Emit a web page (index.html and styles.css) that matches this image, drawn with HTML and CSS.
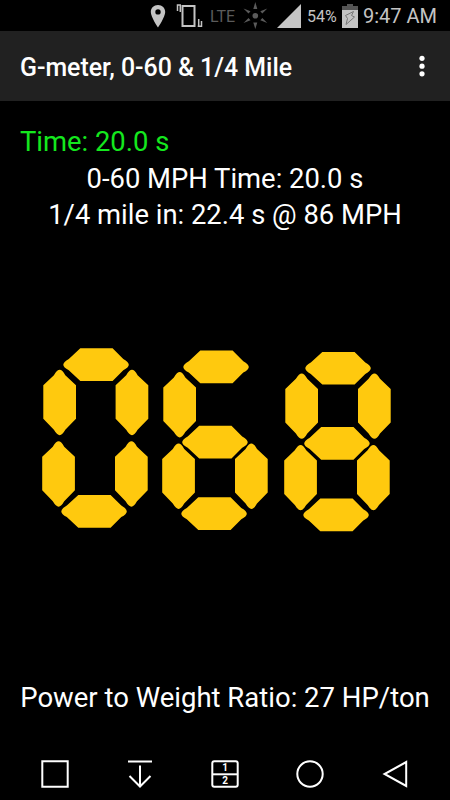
FILE: index.html
```html
<!DOCTYPE html>
<html lang="en">
<head>
  <meta charset="UTF-8" />
  <title>G-meter, 0-60 &amp; 1/4 Mile</title>
  <link rel="stylesheet" href="styles.css">
</head>
<body>
  <!-- shared shapes for the speed display -->
  <svg class="defs" width="0" height="0">
    <defs>
      <path id="seg-h" d="M17 0H49.3L60 10.6Q65.5 13.8 65.5 16.4Q65.5 19 60 22L49.3 32.7H17L5.500 22Q0 19 0 16.400Q0 13.800 5.500 10.600Z" />
      <path id="seg-v" d="M0 15.500V49L10.600 60Q13.800 65.400 16.400 65.400Q19 65.400 22 60L32.700 49V15.500L22 5.400Q19 0 16.400 0Q13.800 0 10.600 5.400Z" />
    </defs>
  </svg>

  <header class="status-bar">
    <svg class="icon-status" width="135" height="31" viewBox="0 0 135 31">
      <path fill="#c4c4c4" fill-rule="evenodd" d="M8 5C3.800 5 .8 8 .8 12C.8 17 8 27.500 8 27.500S15.200 17 15.200 12C15.200 8 12.200 5 8 5ZM8 9.200A2.700 2.700 0 1 1 8 14.600A2.700 2.700 0 0 1 8 9.200Z" />
      <path fill="none" stroke="#c4c4c4" stroke-width="2" d="M32.500 6H44.500V26H32.500Z" />
      <path fill="none" stroke="#c4c4c4" stroke-width="1.500" d="M31 5H27.500V11M30.300 5V12M47.700 26.300H51.500V21M48.700 19V26" />
      <g fill="#5b5b5b">
        <circle cx="105.300" cy="15.700" r="2.800" />
        <path d="M105.300 2L107.300 9H103.300ZM105.300 29L107.300 22.500H103.300ZM93.500 8.500L100.500 11.200L98.500 13.500ZM117.300 8.500L110.300 11.200L112.300 13.500ZM93.500 23L98.500 18L100.500 20.300ZM117.300 23L112.300 18L110.300 20.300Z" />
      </g>
    </svg>
    <span class="network">LTE</span>
    <svg width="24" height="24" viewBox="0 0 24 24"><path fill="#c4c4c4" d="M0 24L24 0V24Z" /></svg>
    <span class="percent">54%</span>
    <svg class="battery" width="16" height="24" viewBox="0 0 16 24">
      <path fill="#555" d="M5 0H11V2H16V6H0V2H5Z" />
      <path fill="#c4c4c4" d="M0 6H16V24H0Z" />
      <path fill="none" stroke="#777" d="M11.500 7.500L3.500 11.500L5.500 14.500L4 20.500L12.500 13L9.500 11.500Z" />
    </svg>
    <span class="clock">9:47 AM</span>
  </header>

  <div class="app-bar">
    <h1>G-meter, 0-60 &amp; 1/4 Mile</h1>
    <svg width="6" height="22" viewBox="0 0 6 22" fill="#fff">
      <circle cx="3" cy="3.300" r="2.600" />
      <circle cx="3" cy="11.200" r="2.600" />
      <circle cx="3" cy="18.800" r="2.600" />
    </svg>
  </div>

  <main>
    <div class="results">
      <div class="timer">Time: 20.0 s</div>
      <div class="result">0-60 MPH Time: 20.0 s</div>
      <div class="result">1/4 mile in: 22.4 s @ 86 MPH</div>
    </div>

    <svg class="speed" width="450" height="200" viewBox="0 340 450 200" fill="#ffc90e">
      <g transform="translate(36 340)">
        <use href="#seg-h" x="27.300" y="8.300" />
        <use href="#seg-v" x="7.300" y="29.800" />
        <use href="#seg-v" x="79.600" y="29.800" />
        <use href="#seg-v" x="6.200" y="101.300" />
        <use href="#seg-v" x="79" y="101.300" />
        <use href="#seg-h" x="25.300" y="155" />
      </g>
      <g transform="translate(156 342.300)">
        <use href="#seg-h" x="27.300" y="8.300" />
        <use href="#seg-v" x="7.300" y="29.800" />
        <use href="#seg-h" x="26.200" y="83.500" />
        <use href="#seg-v" x="6.200" y="101.300" />
        <use href="#seg-v" x="79" y="101.300" />
        <use href="#seg-h" x="25.300" y="155" />
      </g>
      <g transform="translate(278 343.600)">
        <use href="#seg-h" x="27.300" y="8.300" />
        <use href="#seg-v" x="7.300" y="29.800" />
        <use href="#seg-v" x="80" y="29.800" />
        <use href="#seg-h" x="26.200" y="83.500" />
        <use href="#seg-v" x="6.200" y="101.300" />
        <use href="#seg-v" x="79" y="101.300" />
        <use href="#seg-h" x="25.300" y="155" />
      </g>
    </svg>

    <div class="ratio">Power to Weight Ratio: 27 HP/ton</div>
  </main>

  <nav class="nav-bar">
    <svg viewBox="0 0 30 30"><path d="M2.300 2.300H27.700V27.700H2.300Z" /></svg>
    <svg viewBox="0 0 30 30"><path d="M3 2.500H27M15 6.500V27M4.500 17L15 27.500L25.500 17" /></svg>
    <svg viewBox="0 0 30 30">
      <rect x="2.300" y="2.300" width="25.400" height="25.400" rx="2" />
      <path d="M2 15.300H28" />
      <text x="15" y="12.400">1</text>
      <text x="15" y="24.800">2</text>
    </svg>
    <svg viewBox="0 0 30 30"><circle cx="15" cy="15" r="12.700" /></svg>
    <svg viewBox="0 0 30 30"><path d="M26.200 3V27L4.500 15Z" /></svg>
  </nav>
</body>
</html>
```
FILE: styles.css
```css
body {
  margin: 0;
  width: 450px;
  height: 800px;
  display: flex;
  flex-direction: column;
  background-color: #000;
  color: #fff;
  font-family: Roboto, sans-serif;
  overflow: hidden;
}

svg {
  display: block;
  flex-shrink: 0;
}

.defs {
  display: none;
}

.status-bar {
  height: 31px;
  display: flex;
  align-items: center;
  padding-left: 150px;
  color: #c4c4c4;
  white-space: nowrap;
}

.network {
  width: 25px;
  margin-left: -75px;
  margin-right: 42px;
  padding-top: 1px;
  font-size: 16px;
  color: #5b5b5b;
}

.percent {
  width: 31px;
  margin-left: 6px;
  padding-top: 2px;
  font-size: 16px;
}

.battery {
  margin-left: 4px;
}

.clock {
  margin-left: 5px;
  padding-top: 1px;
  font-size: 20px;
}

.app-bar {
  height: 70px;
  box-sizing: border-box;
  padding: 0 25px 0 20px;
  display: flex;
  align-items: center;
  justify-content: space-between;
  background-color: #212121;
}

h1 {
  margin: 0;
  padding-top: 4px;
  font-size: 24.9px;
  font-weight: 500;
  line-height: 36px;
}

main {
  flex: 1;
  display: flex;
  flex-direction: column;
}

.results {
  height: 217px;
  box-sizing: border-box;
  padding: 23px 20px 0;
  margin-bottom: 22px;
  font-size: 27.4px;
  line-height: 36.6px;
}

.timer {
  color: #14e81e;
}

.result {
  text-align: center;
}

.ratio {
  margin-top: 139px;
  font-size: 27.5px;
  line-height: 37px;
  text-align: center;
  white-space: nowrap;
}

.nav-bar {
  height: 52px;
  padding: 0 12px;
  display: flex;
  align-items: center;
  justify-content: space-around;
}

.nav-bar svg {
  width: 30px;
  height: 30px;
  fill: none;
  stroke: #fff;
  stroke-width: 2;
}

.nav-bar text {
  fill: #fff;
  stroke: none;
  font-size: 10px;
  font-weight: bold;
  text-anchor: middle;
}
```
